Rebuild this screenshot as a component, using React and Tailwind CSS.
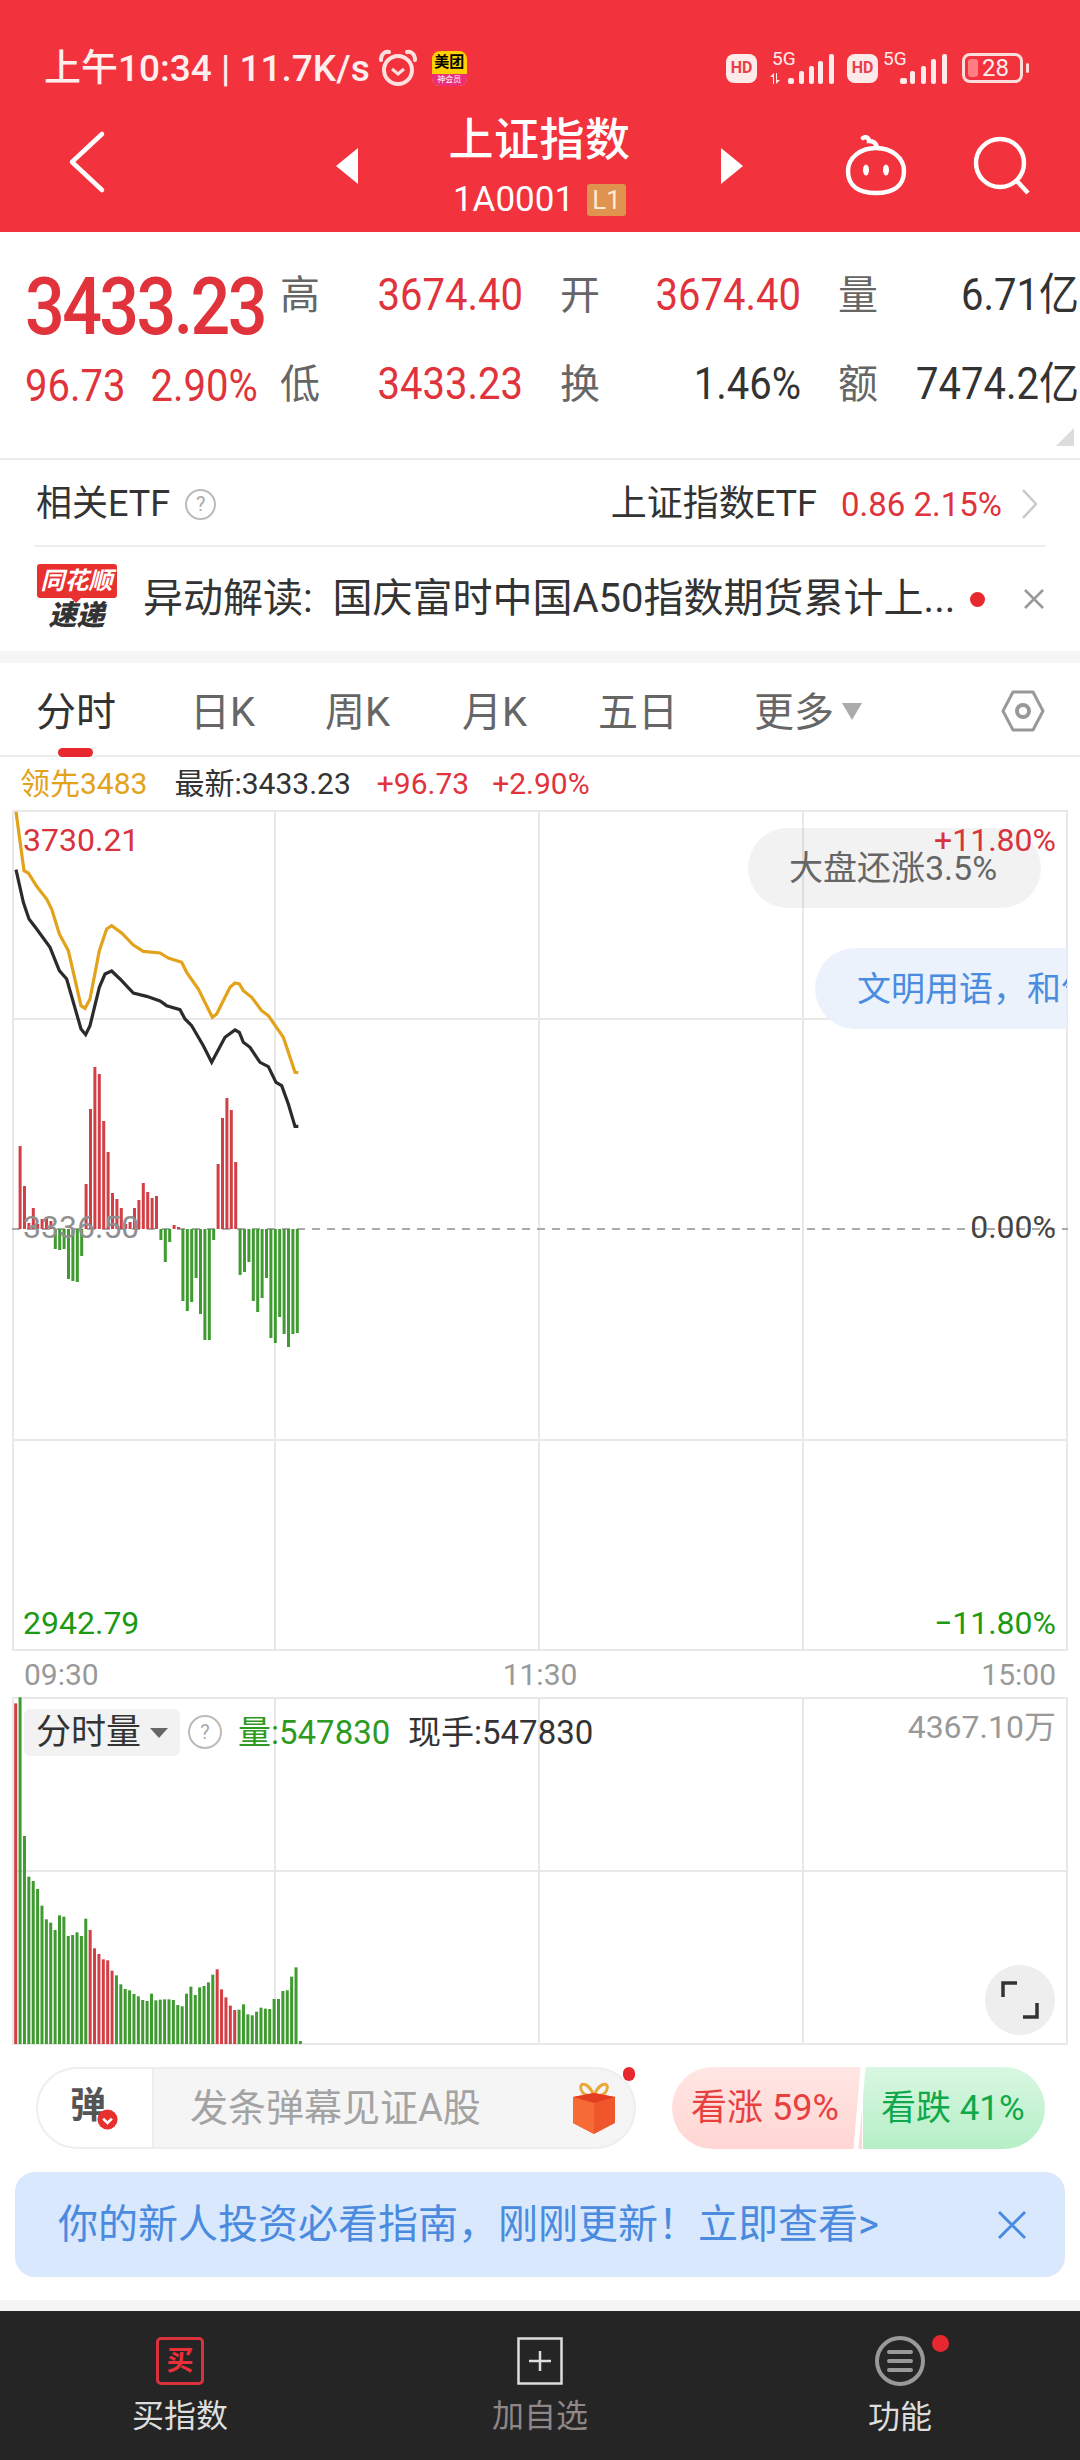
import React from "react";

const RED = "text-[#e0333c]";

// price bars, height from the zero line (up = red, down = green)
const priceBars = [
  0, 83, 43, 6, 21, 5, 10, 12, 8, -20, -21, -20, -50, -52, -53, -27, 45, 120, 162, 155, 108, 77, 36, 30, 21, 5, 7, 21,
  29, 46, 37, 31, 33, -11, -33, -13, 4, 2, -72, -82, -73, -49, -85, -111, -111, -11, 65, 111, 131, 119, 67, -46, -43,
  -33, -72, -83, -69, -49, -109, -114, -88, -105, -118, -105, -104,
];

// volume bars, top measured off the 3x crop
const volTops = [
  190, 172, 588, 710, 723, 747, 797, 838, 848, 870, 826, 830, 888, 885, 877, 888, 836, 870, 925, 942, 958, 961, 992,
  1006, 1033, 1047, 1051, 1062, 1069, 1080, 1083, 1061, 1081, 1079, 1078, 1078, 1080, 1095, 1099, 1061, 1040, 1065,
  1042, 1038, 1027, 1004, 988, 1048, 1072, 1097, 1110, 1109, 1093, 1123, 1126, 1115, 1103, 1106, 1107, 1077, 1077,
  1053, 1051, 1010, 982, 1203,
];
const volRed = (i) => i === 0 || (i >= 17 && i <= 22) || (i >= 46 && i <= 50);

const gold =
  "48,38 72,215 85,222 110,262 140,300 155,330 178,405 205,455 243,620 255,628 270,600 298,455 320,390 335,380 365,402 400,438 430,457 480,462 505,477 545,490 560,520 595,570 637,655 650,645 690,565 705,552 718,555 730,575 755,595 785,635 805,650 850,715 885,820 895,821";
const black =
  "48,212 70,310 87,360 110,390 150,445 178,515 200,540 243,690 257,707 270,680 298,565 315,525 335,516 360,540 400,582 440,592 480,606 500,620 540,632 555,660 575,680 610,740 635,790 675,715 705,693 718,700 730,730 750,745 780,790 805,803 828,850 845,860 865,915 885,982 895,982";

const scalePts = (pts) =>
  pts
    .split(" ")
    .map((p) => {
      const [x, y] = p.split(",").map(Number);
      return `${x / 3},${800 + y / 3}`;
    })
    .join(" ");

const SignalA = () => (
  <svg width="67" height="34" viewBox="0 0 67 34" fill="#ffeaea">
    <text x="4" y="14" fontSize="19" fontFamily="Roboto">5G</text>
    <path d="M5 33v-7H2l4-4v11zM9 22v7h3l-4 4V22z" />
    <rect x="20" y="27" width="6" height="6" rx="2" />
    <rect x="31" y="20" width="5" height="13" rx="2" />
    <rect x="41" y="15" width="5" height="18" rx="2" />
    <rect x="50" y="10" width="5" height="23" rx="2" />
    <rect x="61" y="3" width="5" height="30" rx="2" />
  </svg>
);

const SignalB = () => (
  <svg width="64" height="34" viewBox="0 0 64 34" fill="#ffeaea">
    <text x="0" y="14" fontSize="19" fontFamily="Roboto">5G</text>
    <rect x="17" y="27" width="7" height="6" rx="2" />
    <rect x="27" y="20" width="5" height="13" rx="2" />
    <rect x="38" y="15" width="5" height="18" rx="2" />
    <rect x="48" y="8" width="5" height="25" rx="2" />
    <rect x="59" y="3" width="5" height="30" rx="2" />
  </svg>
);

const HdBadge = () => (
  <div className="w-[31px] h-[29px] rounded-[8px] bg-[#ffeaea] text-[#e9404a] text-[16px] font-bold flex items-center justify-center">
    HD
  </div>
);

const QuoteRow = ({ label, value, color = RED, wide }) => (
  <div className={`flex items-center shrink-0 ${wide ? "w-[243px] mr-[37px]" : "w-[241px] mr-[37px] last:mr-0"}`}>
    <span className="w-[42px] text-[40px] leading-none text-[#666]">{label}</span>
    <span className={`flex-1 text-right text-[40px] leading-none origin-right scale-y-[1.1] ${color}`}>{value}</span>
  </div>
);

const HelpIcon = ({ size = 31 }) => (
  <div
    className="rounded-full border-2 border-[#bbb] text-[#aaa] flex items-center justify-center shrink-0 text-[20px] leading-none"
    style={{ width: size, height: size }}
  >
    ?
  </div>
);

const App = () => {
  return (
    <div className="w-[1080px] h-[2460px] bg-white overflow-hidden font-[Roboto,'Noto_Sans_CJK_SC',sans-serif]">
      {/* header */}
      <div className="h-[232px] bg-[#f2323c] text-white">
        <div className="h-[118px] pt-[48px] pl-[44px] pr-[51px] flex items-start justify-between">
          <div className="flex items-center h-[40px]">
            <span className="text-[37px] leading-none font-medium text-[#ffeeee] whitespace-nowrap">上午10:34 | 11.7K/s</span>
            <svg className="ml-[8px]" width="40" height="38" viewBox="0 0 40 38" fill="none" stroke="#ffe0e0" strokeWidth="4">
              <circle cx="20" cy="21" r="14" />
              <path d="M14 20l6 5 6-5" strokeWidth="3" />
              <path d="M3 11c0-6 4-9 8-8M37 11c0-6-4-9-8-8" strokeLinecap="round" />
            </svg>
            <div className="ml-[14px] w-[35px] h-[35px] rounded-[8px] overflow-hidden flex flex-col items-center bg-[#ffd100]">
              <span className="text-[15px] leading-[23px] font-bold text-black whitespace-nowrap">美团</span>
              <span className="w-full flex-1 bg-[#ec2d7a] text-[8px] leading-[12px] text-center text-white whitespace-nowrap">神会员</span>
            </div>
          </div>
          <div className="flex items-center h-[40px]">
            <HdBadge />
            <div className="ml-[11px]"><SignalA /></div>
            <div className="ml-[12px]"><HdBadge /></div>
            <div className="ml-[5px]"><SignalB /></div>
            <div className="ml-[15px] relative w-[61px] h-[30px] rounded-[8px] border-[3px] border-[#ffdcdc] overflow-hidden flex items-center justify-center text-[24px] leading-none text-[#ffeeee]">
              <span className="absolute left-[3px] top-[3px] bottom-[3px] w-[10px] rounded-[3px] bg-[#ff7d83]" />
              <span className="relative pl-[6px]">28</span>
            </div>
            <div className="ml-[3px] w-[3px] h-[10px] rounded-full bg-[#ffdcdc]" />
          </div>
        </div>
        <div className="h-[114px] flex items-start">
          <svg className="ml-[66px] mt-[12px] shrink-0" width="42" height="66" viewBox="0 0 42 66" fill="none" stroke="#fff" strokeWidth="4.5">
            <path d="M36 5L6 33l30 28" strokeLinecap="round" strokeLinejoin="round" transform="translate(0 -1)" />
          </svg>
          <div className="ml-[228px] mt-[30px] w-0 h-0 border-y-[18px] border-y-transparent border-r-[22px] border-r-white" />
          <div className="w-[363px] flex flex-col items-center">
            <div className="text-[45px] leading-[50px] font-medium mt-[-2px] tracking-[0.5px]">上证指数</div>
            <div className="flex items-center mt-[16px]">
              <span className="text-[35px] leading-[36px] text-[#fff]">1A0001</span>
              <span className="ml-[13px] w-[39px] h-[32px] rounded-[3px] bg-[#e0934f] text-[26px] leading-[32px] text-center text-[#fde9d5]">L1</span>
            </div>
          </div>
          <div className="mt-[30px] w-0 h-0 border-y-[18px] border-y-transparent border-l-[22px] border-l-white" />
          <svg className="ml-[99px] mt-[17px] shrink-0" width="68" height="62" viewBox="0 0 68 62" fill="none" stroke="#fff" strokeWidth="4.5">
            <path d="M21 3c3-2 6 0 6 3 4 0 7 2 8 6" strokeLinecap="round" />
            <path d="M34 13c16 0 28 10 28 23 0 15-11 22-28 22S6 51 6 36c0-13 12-23 28-23z" />
            <ellipse cx="24" cy="35" rx="3" ry="5.5" fill="#fff" stroke="none" />
            <ellipse cx="44" cy="35" rx="3" ry="5.5" fill="#fff" stroke="none" />
          </svg>
          <svg className="ml-[62px] mt-[18px] shrink-0" width="60" height="60" viewBox="0 0 60 60" fill="none" stroke="#fff" strokeWidth="4.5">
            <circle cx="28" cy="27" r="24" />
            <path d="M44 44l12 13" />
          </svg>
        </div>
      </div>

      {/* quote */}
      <div className="relative h-[228px] border-b-2 border-[#ececec] flex">
        <div className="w-[280px] pl-[25px] shrink-0">
          <div className="mt-[36px] h-[76px] text-[70px] leading-[76px] font-medium tracking-[-2.6px] text-[#e0333c] scale-y-[1.15] origin-left">3433.23</div>
          <div className="mt-[20px] flex text-[40px] leading-[46px] text-[#e0333c] scale-y-[1.1]">
            <span>96.73</span>
            <span className="ml-[25px]">2.90%</span>
          </div>
        </div>
        <div className="pt-[41px]">
          <div className="flex h-[46px] items-center">
            <QuoteRow wide label="高" value="3674.40" />
            <QuoteRow label="开" value="3674.40" />
            <QuoteRow label="量" value="6.71亿" color="text-[#333]" />
          </div>
          <div className="flex h-[46px] items-center mt-[43px]">
            <QuoteRow wide label="低" value="3433.23" />
            <QuoteRow label="换" value="1.46%" color="text-[#333]" />
            <QuoteRow label="额" value="7474.2亿" color="text-[#333]" />
          </div>
        </div>
        <div className="absolute right-[6px] bottom-[12px] w-0 h-0 border-l-[18px] border-l-transparent border-b-[18px] border-b-[#dcdcdc]" />
      </div>

      {/* etf row */}
      <div className="mx-[34px] h-[87px] pt-[3px] border-b-2 border-[#eeeeee] flex items-center">
        <span className="ml-[2px] text-[36px] leading-none text-[#333]">相关ETF</span>
        <div className="ml-[15px]"><HelpIcon /></div>
        <span className="ml-auto text-[36px] leading-none text-[#333]">上证指数ETF</span>
        <span className="ml-[24px] text-[33px] leading-none text-[#e0333c] whitespace-nowrap">0.86 2.15%</span>
        <svg className="ml-[19px] mr-[7px]" width="18" height="32" viewBox="0 0 18 32" fill="none" stroke="#c9c9c9" strokeWidth="2.5">
          <path d="M2 2l13 14L2 30" />
        </svg>
      </div>

      {/* news row */}
      <div className="h-[104px] pl-[36px] pr-[36px] flex items-center">
        <div className="w-[81px] h-[66px] flex flex-col items-center shrink-0 mt-[-4px]">
          <div className="relative w-[80px] h-[34px] rounded-[3px] bg-[#e8302f] text-white text-[24px] leading-[34px] text-center italic font-bold whitespace-nowrap">
            同花顺
            <span className="absolute left-[34px] bottom-[-5px] w-0 h-0 border-x-[5px] border-x-transparent border-t-[5px] border-t-[#e8302f]" />
          </div>
          <div className="mt-[4px] text-[28px] leading-[28px] italic font-black text-[#333] whitespace-nowrap">速递</div>
        </div>
        <span className="ml-[26px] w-[824px] shrink-0 text-[40px] leading-[48px] text-[#333] whitespace-nowrap overflow-hidden">
          异动解读:{"\u00a0\u00a0"}国庆富时中国A50指数期货累计上...
        </span>
        <span className="ml-[3px] w-[15px] h-[15px] rounded-full bg-[#e8282f] shrink-0" />
        <svg className="ml-[38px] shrink-0" width="22" height="22" viewBox="0 0 22 22" stroke="#999" strokeWidth="2.5">
          <path d="M2 2l18 18M20 2L2 20" />
        </svg>
      </div>
      <div className="h-[12px] bg-[#f5f5f5]" />

      {/* tabs */}
      <div className="relative h-[94px] border-b-2 border-[#ececec] flex items-start pt-[28px] text-[40px] leading-[44px] text-[#666]">
        <span className="absolute left-[36px] text-[#333]">分时</span>
        <span className="absolute left-[190px]">日K</span>
        <span className="absolute left-[325px]">周K</span>
        <span className="absolute left-[462px]">月K</span>
        <span className="absolute left-[598px]">五日</span>
        <span className="absolute left-[754px]">更多</span>
        <div className="absolute left-[842px] top-[40px] w-0 h-0 border-x-[10px] border-x-transparent border-t-[17px] border-t-[#aaa]" />
        <svg className="absolute left-[1000px] top-[26px]" width="46" height="44" viewBox="0 0 46 44" fill="none" stroke="#999" strokeWidth="3">
          <path d="M13 3h20l10 19-10 19H13L3 22z" strokeLinejoin="round" />
          <circle cx="23" cy="22" r="6" strokeWidth="4" />
        </svg>
        <div className="absolute left-[58px] bottom-[-2px] w-[35px] h-[9px] rounded-full bg-[#e8282f]" />
      </div>

      {/* last tick */}
      <div className="h-[53px] pl-[20px] flex items-center text-[30px] leading-none">
        <span className="text-[#e2a21a]">领先3483</span>
        <span className="ml-[27px] text-[#333]">最新:3433.23</span>
        <span className="ml-[26px] text-[#e0333c]">+96.73</span>
        <span className="ml-[23px] text-[#e0333c]">+2.90%</span>
      </div>

      {/* price chart */}
      <div className="relative h-[842px] overflow-hidden">
        <svg className="block" width="1080" height="842" viewBox="0 811 1080 842">
          <g stroke="#e8e8e8" strokeWidth="2" fill="none">
            <path d="M12 812H1068M12 1020H1068M12 1441H1068M12 1651H1068M13 811V1652M1067 811V1652" />
            <path d="M275 811V1652M539 811V1652M803 811V1652" />
          </g>
          <path d="M12 1230H1068" stroke="#aaa" strokeWidth="2" strokeDasharray="8 7" />
          {priceBars.map((h, i) =>
            h === 0 ? null : (
              <rect
                key={i}
                x={15.7 + 4.4 * i - 1.5}
                y={h > 0 ? 1230 - h : 1230}
                width="3"
                height={Math.abs(h)}
                fill={h > 0 ? "#d23f45" : "#3f9a30"}
              />
            )
          )}
          <polyline points={scalePts(gold)} fill="none" stroke="#e2a21a" strokeWidth="3.2" />
          <polyline points={scalePts(black)} fill="none" stroke="#2b2b2b" strokeWidth="3.2" />
        </svg>
        <span className="absolute left-[23px] top-[11px] text-[32px] leading-[38px] text-[#d8333c]">3730.21</span>
        <span className="absolute left-[23px] top-[399px] text-[32px] leading-[36px] text-[#8f8f8f]">3336.50</span>
        <span className="absolute left-[23px] bottom-[10px] text-[32px] leading-[38px] text-[#1c9a14]">2942.79</span>
        <div className="absolute left-[748px] top-[18px] w-[293px] h-[80px] rounded-full bg-[#808080]/10 pl-[41px] flex items-center text-[34px] leading-none text-[#666] whitespace-nowrap">
          大盘还涨3.5%
        </div>
        <span className="absolute right-[24px] top-[11px] text-[32px] leading-[38px] text-[#d8333c]">+11.80%</span>
        <span className="absolute right-[24px] top-[399px] text-[32px] leading-[36px] text-[#444]">0.00%</span>
        <span className="absolute right-[24px] bottom-[10px] text-[32px] leading-[38px] text-[#1c9a14]">−11.80%</span>
        <div className="absolute left-[815px] top-[138px] w-[252px] h-[81px] rounded-l-full bg-[#e9f1fc]/90 pl-[42px] flex items-center overflow-hidden text-[34px] leading-none text-[#4a8ce0] whitespace-nowrap">
          文明用语，和气
        </div>
      </div>

      {/* time axis */}
      <div className="h-[45px] px-[24px] flex items-center justify-between text-[30px] leading-none text-[#999]">
        <span>09:30</span>
        <span>11:30</span>
        <span>15:00</span>
      </div>

      {/* volume chart */}
      <div className="relative h-[348px] overflow-hidden">
        <svg className="block" width="1080" height="348" viewBox="0 1697 1080 348">
          <g stroke="#e8e8e8" strokeWidth="2" fill="none">
            <path d="M12 1698H1068M12 1871H1068M12 2044H1068M13 1697V2045M1067 1697V2045" />
            <path d="M275 1697V2045M539 1697V2045M803 1697V2045" />
          </g>
          {volTops.map((t, i) => (
            <rect
              key={i}
              x={15.7 + 4.38 * i - 1.5}
              y={1640 + t / 3}
              width="3"
              height={(1212 - t) / 3}
              fill={volRed(i) ? "#d23f45" : "#3f9a30"}
            />
          ))}
        </svg>
        <div className="absolute left-[24px] top-[12px] w-[156px] h-[47px] rounded-[6px] bg-[#f2f2f2] flex items-center pl-[12px] text-[35px] leading-none text-[#333]">
          分时量
          <span className="ml-[9px] w-0 h-0 border-x-[9px] border-x-transparent border-t-[10px] border-t-[#666]" />
        </div>
        <div className="absolute left-[188px] top-[18px]"><HelpIcon size={34} /></div>
        <span className="absolute left-[238px] top-[17px] text-[33px] leading-[38px] text-[#2e9a22]">量:547830</span>
        <span className="absolute left-[408px] top-[17px] text-[33px] leading-[38px] text-[#333]">现手:547830</span>
        <span className="absolute right-[24px] top-[11px] text-[32px] leading-[38px] text-[#999]">4367.10万</span>
        <div className="absolute left-[985px] top-[268px] w-[70px] h-[70px] rounded-full bg-[#eeeeee] flex items-center justify-center">
          <svg width="40" height="40" viewBox="0 0 40 40" fill="none" stroke="#333" strokeWidth="3.5">
            <path d="M3 17V3h14M37 23v14H23" />
          </svg>
        </div>
      </div>

      {/* comment + vote */}
      <div className="h-[127px] pt-[22px] pl-[36px] flex items-start">
        <div className="relative w-[600px] h-[82px] rounded-full border-2 border-[#eeeeee] bg-[#f5f5f5] flex">
          <div className="relative w-[116px] h-full rounded-l-full bg-white border-r-2 border-[#eeeeee] text-[36px] leading-[74px] font-bold text-[#555] pl-[32px]">
            弹
            <svg className="absolute left-[59px] top-[40px]" width="21" height="21" viewBox="0 0 24 24">
              <circle cx="12" cy="12" r="11.5" fill="#e8302f" />
              <path d="M7 11l5 5 5-5" fill="none" stroke="#fff" strokeWidth="3" />
            </svg>
          </div>
          <span className="ml-[36px] text-[38px] leading-[78px] text-[#a3a3a3] whitespace-nowrap">发条弹幕见证A股</span>
          <svg className="absolute left-[532px] top-[12px]" width="48" height="54" viewBox="0 0 48 54">
            <path d="M24 14C16-3 6 3 13 12c3 3 7 3 11 2zM24 14C32-3 42 3 35 12c-3 3-7 3-11 2z" fill="none" stroke="#e8a93a" strokeWidth="3" />
            <path d="M3 16l21-4 21 4v26L24 53 3 42z" fill="#f0562c" />
            <path d="M3 16l21 6 21-6-21-4z" fill="#e43d22" />
            <path d="M24 22v31L3 42V16z" fill="#f56a35" />
          </svg>
          <span className="absolute right-[-1px] top-[-2px] w-[12px] h-[14px] rounded-full bg-[#e8282f]" />
        </div>
        <div className="ml-[36px] w-[373px] h-[82px] flex relative rounded-full overflow-hidden leading-none">
          <div className="w-[190px] bg-gradient-to-b from-[#ffe6e4] to-[#ffd6d3] pl-[19px] flex items-center text-[36px] text-[#e8403f] whitespace-nowrap">
            看涨 59%
          </div>
          <div className="absolute left-[185px] top-0 bottom-0 w-[5px] bg-white -skew-x-[5deg]" />
          <div className="flex-1 bg-gradient-to-b from-[#d9f7e2] to-[#b5efc6] pl-[18px] ml-[1px] flex items-center text-[35px] text-[#0fa84a] whitespace-nowrap">
            看跌 41%
          </div>
        </div>
      </div>

      {/* guide banner */}
      <div className="mx-[15px] h-[105px] rounded-[20px] bg-[#d9e8fc] flex items-center pl-[43px] text-[#4a8be0]">
        <span className="text-[40px] leading-none whitespace-nowrap">你的新人投资必看指南，刚刚更新！立即查看&gt;</span>
        <svg className="ml-auto mr-[38px] shrink-0" width="30" height="30" viewBox="0 0 30 30" stroke="#4a8be0" strokeWidth="3">
          <path d="M2 2l26 26M28 2L2 28" />
        </svg>
      </div>
      <div className="h-[23px]" />
      <div className="h-[11px] bg-[#f5f5f5]" />

      {/* bottom bar */}
      <div className="h-[149px] bg-[#252525] grid grid-cols-3 text-[32px] leading-none">
        <div className="flex flex-col items-center pt-[26px] text-[#dddddd]">
          <div className="w-[48px] h-[48px] rounded-[5px] border-[3px] border-[#d8333c] text-[#e8303a] text-[27px] leading-[42px] font-bold text-center">买</div>
          <span className="mt-[15px]">买指数</span>
        </div>
        <div className="flex flex-col items-center pt-[26px] text-[#8f8686]">
          <svg width="46" height="48" viewBox="0 0 46 48" fill="none" stroke="#dddddd" strokeWidth="2.5">
            <rect x="1.5" y="1.5" width="43" height="45" />
            <path d="M23 14v20M12 24h22" />
          </svg>
          <span className="mt-[15px]">加自选</span>
        </div>
        <div className="relative flex flex-col items-center pt-[25px] text-[#dddddd]">
          <svg width="50" height="50" viewBox="0 0 50 50" fill="none" stroke="#999" strokeWidth="4">
            <circle cx="25" cy="25" r="23" />
            <path d="M14 16h22M14 25h22M14 34h22" strokeLinecap="round" />
          </svg>
          <span className="mt-[15px]">功能</span>
          <span className="absolute left-[212px] top-[24px] w-[17px] h-[17px] rounded-full bg-[#e8282f]" />
        </div>
      </div>
    </div>
  );
};

export default App;
